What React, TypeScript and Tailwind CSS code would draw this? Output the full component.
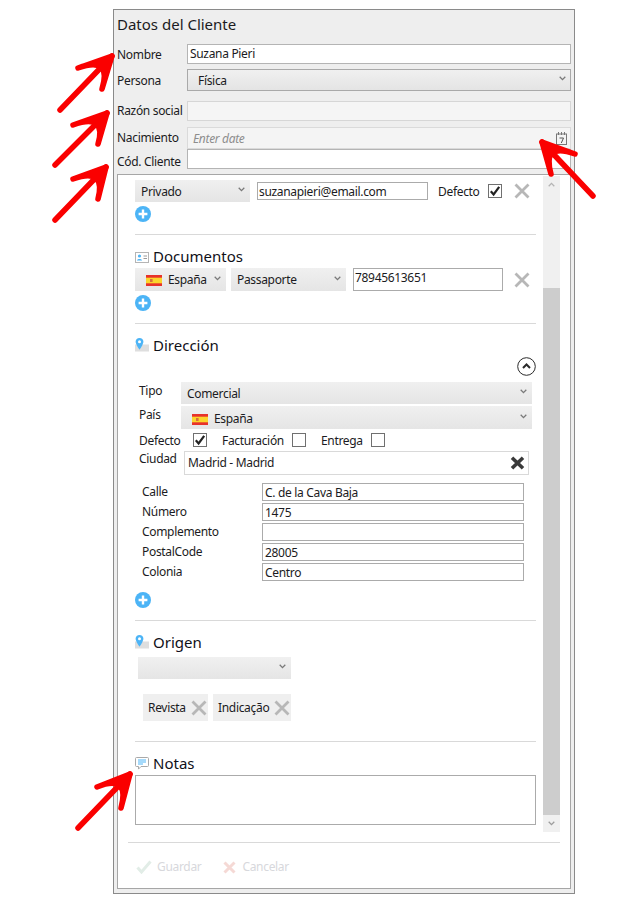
import React from "react";

const Chevron = ({ className = "" }: { className?: string }) => (
  <svg width="7" height="5" viewBox="0 0 7 5" className={className}>
    <path d="M.7.8l2.800 2.800L6.300.8" fill="none" stroke="#7a7a7a" strokeWidth="1.300" />
  </svg>
);

const Flag = () => (
  <svg width="16" height="11" viewBox="0 0 16 11" className="shrink-0">
    <rect width="16" height="11" fill="#e8322b" />
    <rect y="2.7" width="16" height="5.6" fill="#fbd52c" />
    <rect x="4" y="4" width="2.6" height="3" fill="#d8703a" />
  </svg>
);

const Cross = () => (
  <svg width="16" height="16" viewBox="0 0 16 16" className="shrink-0">
    <path d="M1.500 1.500l13 13M14.500 1.500l-13 13" stroke="#b7b7b7" strokeWidth="2.800" />
  </svg>
);

const Plus = () => (
  <svg width="16" height="16" viewBox="0 0 16 16" className="block">
    <circle cx="8" cy="8" r="8" fill="#4cb4f6" />
    <path d="M8 3.600v8.800M3.600 8h8.800" stroke="#fff" strokeWidth="2.400" />
  </svg>
);

const Pin = () => (
  <svg width="14" height="14" viewBox="0 0 14 14" className="shrink-0">
    <rect y="6.500" width="14" height="7" fill="#dedede" />
    <path d="M4.500 0C2.200 0 .6 1.700.6 3.800c0 2.600 3.900 8 3.900 8s3.900-5.400 3.900-8C8.400 1.700 6.800 0 4.500 0z" fill="#4cb4f6" />
    <circle cx="4.500" cy="3.800" r="1.500" fill="#fff" />
  </svg>
);

const CardIcon = () => (
  <svg width="14" height="11" viewBox="0 0 14 11" className="shrink-0">
    <rect x=".5" y=".5" width="13" height="10" fill="#fff" stroke="#b5b5b5" />
    <circle cx="4.500" cy="4" r="1.600" fill="#4cb4f6" />
    <path d="M2 8.500c0-2 5-2 5 0z" fill="#4cb4f6" />
    <path d="M8.500 4h3.500M8.500 6.500h3.500" stroke="#9a9a9a" />
  </svg>
);

const NoteIcon = () => (
  <svg width="14" height="13" viewBox="0 0 14 13" className="shrink-0">
    <path d="M1.500.5h11a1 1 0 0 1 1 1v7a1 1 0 0 1-1 1H6l-2.500 2.600V9.500h-2a1 1 0 0 1-1-1v-7a1 1 0 0 1 1-1z" fill="#fff" stroke="#a9a9a9" />
    <path d="M3 3h8M3 5h8M3 7h5" stroke="#4cb4f6" />
  </svg>
);

const Select = ({ w, h, children, pl = "pl-[6px]", textPad = "pt-px" }: { w: string; h: string; children?: React.ReactNode; pl?: string; textPad?: string }) => (
  <div className={`${w} ${h} ${pl} pr-[5px] shrink-0 flex items-center justify-between bg-gradient-to-b from-[#f0f0f0] to-[#e5e5e5]`}>
    <div className={`flex items-center gap-[6px] ${textPad}`}>{children}</div>
    <Chevron className="-mt-[3px]" />
  </div>
);

const Box = ({ checked }: { checked?: boolean }) => (
  <div className="w-[14px] h-[14px] shrink-0 border border-[#707070] bg-white flex items-center justify-center">
    {checked && (
      <svg width="12" height="12" viewBox="0 0 12 12">
        <path d="M1.800 6.200l2.800 3.300L10.200 1.800" fill="none" stroke="#222" strokeWidth="2.200" />
      </svg>
    )}
  </div>
);

const Divider = ({ mt }: { mt: string }) => <div className={`${mt} h-px bg-[#d9d9d9]`} />;

const Heading = ({ icon, text, mt, up }: { icon: React.ReactNode; text: string; mt: string; up?: boolean }) => (
  <div className={`${mt} h-[18px] flex items-center gap-[4px] text-[15px] leading-[18px] tracking-normal text-[#101018]`}>
    {icon}
    <span className={up ? "-mt-[2px]" : ""}>{text}</span>
  </div>
);

const Field = ({ label, value, mt }: { label: string; value: string; mt: string }) => (
  <div className={`${mt} h-[18px] flex items-center pl-[7px]`}>
    <span className="w-[120px]">{label}</span>
    <div className="w-[262px] h-[18px] border border-[#ababab] pl-[2px] pt-px flex items-center bg-white">{value}</div>
  </div>
);

const Chip = ({ label, w }: { label: string; w: string }) => (
  <div className={`${w} h-[27px] pl-[5px] pr-[1px] bg-[#efefef] flex items-center justify-between`}>
    <span>{label}</span>
    <Cross />
  </div>
);

const HeaderRow = ({ label, mt, h, children, labelClass = "" }: { label: string; mt: string; h: string; children: React.ReactNode; labelClass?: string }) => (
  <div className={`${mt} ${h} flex items-center`}>
    <span className={`w-[70px] shrink-0 ${labelClass}`}>{label}</span>
    {children}
  </div>
);

const Arrow = ({ tip, tail, a, b }: { tip: number[]; tail: number[]; a: number[]; b: number[] }) => (
  <g fill="#fa0000" stroke="#fa0000" strokeWidth="5.500" strokeLinecap="round" strokeLinejoin="round">
    <path d={`M${tail[0]} ${tail[1]}L${tip[0]} ${tip[1]}`} />
    <path d={`M${a[0]} ${a[1]}L${tip[0]} ${tip[1]}L${b[0]} ${b[1]}Q${tip[0]} ${tip[1]} ${a[0]} ${a[1]}z`} />
  </g>
);

export default function App() {
  return (
    <div className="relative w-[625px] h-[907px] bg-white overflow-hidden text-[12px] leading-[16px] tracking-[-0.32px] text-[#1b1b22]" style={{ fontFamily: '"Noto Sans", sans-serif' }}>
      <div className="ml-[113px] w-[462px] h-[885px] translate-y-[9px] border border-[#8a8a8a] bg-[#eeeeee] pl-[3px] pr-[3px] flex flex-col">
        <div className="h-[30px] pt-[4px] text-[15px] leading-[20px] tracking-normal">Datos del Cliente</div>
        <HeaderRow label="Nombre" mt="mt-[4px]" h="h-[20px]" labelClass="pt-[2px]">
          <div className="flex-1 h-[20px] border border-[#b4b4b4] bg-white pl-[2px] flex items-center">Suzana Pieri</div>
        </HeaderRow>
        <HeaderRow label="Persona" mt="mt-[5px]" h="h-[22px]" labelClass="pt-px">
          <div className="flex-1 h-[22px] border border-[#a9a9a9] bg-gradient-to-b from-[#f0f0f0] to-[#e4e4e4] pl-[10px] pr-[4px] flex items-center justify-between">
            <span className="pt-px">Física</span>
            <Chevron className="-mt-[3px]" />
          </div>
        </HeaderRow>
        <HeaderRow label="Razón social" mt="mt-[10px]" h="h-[20px]">
          <div className="flex-1 h-[20px] border border-[#d6d6d6] bg-[#f5f5f5]" />
        </HeaderRow>
        <HeaderRow label="Nacimiento" mt="mt-[6px]" h="h-[22px]">
          <div className="flex-1 h-[22px] border border-[#dadada] bg-[#f4f4f4] pl-[5px] pr-[3px] flex items-center justify-between">
            <span className="italic text-[#8d8d8d] pt-px">Enter date</span>
            <svg width="11" height="13" viewBox="0 0 11 13">
              <path d="M2.500 0v3M5.500 0v3M8.500 0v3" stroke="#777" />
              <rect x=".5" y="2" width="10" height="10.500" fill="none" stroke="#777" />
              <path d="M3.500 6h4L5.300 11" fill="none" stroke="#555" />
            </svg>
          </div>
        </HeaderRow>
        <HeaderRow label="Cód. Cliente" mt="mt-0" h="h-[20px]" labelClass="pt-[5px]">
          <div className="flex-1 h-[20px] border border-[#b4b4b4] bg-white" />
        </HeaderRow>

        <div className="mt-[5px] w-[454px] h-[715px] border border-[#a6a6a6] bg-white flex flex-col">
          <div className="h-[656px] mt-px flex pl-[17px] overflow-hidden">
            <div className="w-[401px] shrink-0">
              <div className="mt-[4px] h-[22px] flex items-center">
                <Select w="w-[115px]" h="h-[22px]">Privado</Select>
                <div className="ml-[7px] w-[171px] h-[18px] border border-[#ababab] pl-[1px] pt-px flex items-center">suzanapieri@email.com</div>
                <span className="ml-[10px] w-[43px] pt-[2px]">Defecto</span>
                <div className="ml-[7px]"><Box checked /></div>
                <div className="ml-[12px]"><Cross /></div>
              </div>
              <div className="mt-[4px] h-[16px]"><Plus /></div>
              <Divider mt="mt-[12px]" />
              <Heading mt="mt-[13px]" icon={<CardIcon />} text="Documentos" up />
              <div className="mt-[2px] h-[23px] flex items-center">
                <Select w="w-[91px]" h="h-[23px]" pl="pl-[11px]"><Flag />España</Select>
                <div className="ml-[5px]"><Select w="w-[115px]" h="h-[23px]">Passaporte</Select></div>
                <div className="ml-[7px] w-[150px] h-[23px] border border-[#ababab] pl-[1px] pb-[4px] flex items-center">78945613651</div>
                <div className="ml-[11px]"><Cross /></div>
              </div>
              <div className="mt-[4px] h-[16px]"><Plus /></div>
              <Divider mt="mt-[12px]" />
              <Heading mt="mt-[12px]" icon={<Pin />} text="Dirección" />
              <div className="mt-[3px] h-[19px] flex justify-end">
                <svg width="19" height="19" viewBox="0 0 19 19">
                  <circle cx="9.500" cy="9.500" r="8.800" fill="none" stroke="#2a2a2a" />
                  <path d="M6 11l3.500-3.500L13 11" fill="none" stroke="#2a2a2a" strokeWidth="2" />
                </svg>
              </div>
              <div className="mt-[6px] h-[22px] flex items-center pl-[4px]">
                <span className="w-[42px] -mt-[4px]">Tipo</span>
                <Select w="w-[351px]" h="h-[22px]">Comercial</Select>
              </div>
              <div className="mt-[2px] h-[23px] flex items-center pl-[4px]">
                <span className="w-[42px] -mt-[6px]">País</span>
                <Select w="w-[351px]" h="h-[23px]" pl="pl-[11px]" textPad="pt-[3px]"><Flag />España</Select>
              </div>
              <div className="mt-[4px] h-[14px] flex items-center pl-[4px]">
                <span className="w-[54px] pt-px">Defecto</span>
                <Box checked />
                <span className="ml-[15px] w-[70px] pt-px">Facturación</span>
                <Box />
                <span className="ml-[15px] w-[50px] pt-px">Entrega</span>
                <Box />
              </div>
              <div className="mt-[4px] h-[24px] flex items-center pl-[4px]">
                <span className="w-[45px] -mt-[9px]">Ciudad</span>
                <div className="w-[345px] h-[24px] border border-[#d9d9d9] pl-[3px] pr-[3px] flex items-center justify-between">
                  <span>Madrid - Madrid</span>
                  <svg width="15" height="14" viewBox="0 0 15 14">
                    <path d="M2 1.800l11 10.400M13 1.800L2 12.200" stroke="#3a3a3a" strokeWidth="3.600" />
                  </svg>
                </div>
              </div>
              <Field mt="mt-[8px]" label="Calle" value="C. de la Cava Baja" />
              <Field mt="mt-[2px]" label="Número" value="1475" />
              <Field mt="mt-[2px]" label="Complemento" value="" />
              <Field mt="mt-[2px]" label="PostalCode" value="28005" />
              <Field mt="mt-[2px]" label="Colonia" value="Centro" />
              <div className="mt-[11px] h-[16px]"><Plus /></div>
              <Divider mt="mt-[12px]" />
              <Heading mt="mt-[12px]" icon={<Pin />} text="Origen" />
              <div className="mt-[6px] ml-[3px]"><Select w="w-[153px]" h="h-[22px]" /></div>
              <div className="mt-[15px] ml-[8px] flex gap-[5px]">
                <Chip w="w-[65px]" label="Revista" />
                <Chip w="w-[78px]" label="Indicação" />
              </div>
              <Divider mt="mt-[20px]" />
              <Heading mt="mt-[12px]" icon={<NoteIcon />} text="Notas" />
              <div className="mt-[3px] h-[50px] border border-[#ababab]" />
            </div>
            <div className="ml-[7px] w-[17px] shrink-0 flex flex-col bg-[#f0f0f0]">
              <div className="h-[17px] flex items-center justify-center">
                <Chevron className="rotate-180 opacity-50" />
              </div>
              <div className="h-[95px]" />
              <div className="h-[527px] bg-[#cdcdcd]" />
              <div className="h-[17px] flex items-center justify-center">
                <Chevron className="opacity-70" />
              </div>
            </div>
          </div>
          <div className="mt-[10px] ml-[10px] w-[432px] h-px bg-[#d9d9d9]" />
          <div className="mt-[15px] ml-[18px] h-[18px] flex items-center text-[#d7d8dc]">
            <svg width="16" height="14" viewBox="0 0 16 14">
              <path d="M1.500 7.500l4 4.500L14.500 1.500" fill="none" stroke="#e2ede7" strokeWidth="3" />
            </svg>
            <span className="ml-[5px]">Guardar</span>
            <svg width="13" height="13" viewBox="0 0 13 13" className="ml-[22px]">
              <path d="M1.500 1.500l10 10M11.500 1.500l-10 10" stroke="#f5d9d5" strokeWidth="3" />
            </svg>
            <span className="ml-[6px]">Cancelar</span>
          </div>
        </div>
      </div>

      <svg width="625" height="907" viewBox="0 0 625 907" className="absolute inset-0 pointer-events-none">
        <Arrow tip={[112, 56]} tail={[60, 110]} a={[78, 68]} b={[102, 89]} />
        <Arrow tip={[107, 113]} tail={[55, 165]} a={[73, 125]} b={[98, 144]} />
        <Arrow tip={[106, 167]} tail={[55, 220]} a={[73, 179]} b={[98, 199]} />
        <Arrow tip={[542, 142]} tail={[593, 196]} a={[575, 154]} b={[551, 174]} />
        <Arrow tip={[130, 774]} tail={[78, 828]} a={[97, 787]} b={[121, 808]} />
      </svg>
    </div>
  );
}
